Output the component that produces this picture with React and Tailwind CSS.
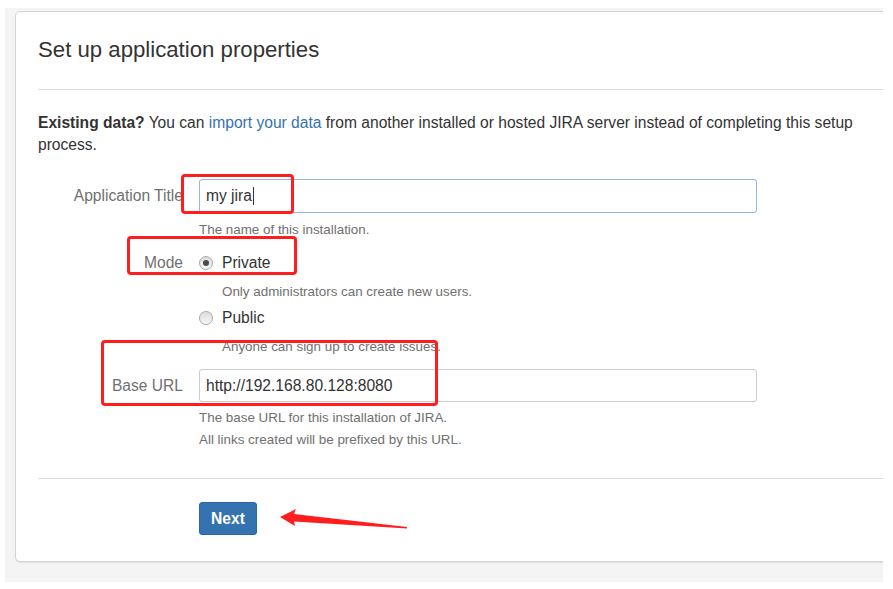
import React from "react";

function Radio({ checked }) {
  return (
    <span className="relative inline-flex items-center justify-center w-[14px] h-[14px] rounded-full border border-[#a8a8a8] bg-gradient-to-b from-[#dcdcdc] to-[#f7f7f7] shrink-0">
      {checked && <span className="w-[6px] h-[6px] rounded-full bg-[#4a4a4a]" />}
    </span>
  );
}

export default function App() {
  return (
    <div className="relative w-[893px] h-[589px] bg-white overflow-hidden font-['Liberation_Sans',Arial,sans-serif] text-[#333]">
      <div className="ml-[5px] mt-[8px] w-[878px] h-[574px] bg-[#f4f4f4] overflow-hidden pt-[3px] pl-[10px]">
        <div className="w-[920px] h-[551px] bg-white border border-[#d5d5d5] rounded-[5px] shadow-[0_1px_1px_rgba(0,0,0,0.08)] px-[22px] flex flex-col">
          <div className="pt-[24px] pb-[25px] border-b border-[#dddddd]">
            <h1 className="text-[22.2px] leading-[28px] font-normal text-[#333]">Set up application properties</h1>
          </div>

          <p className="mt-[22px] text-[15.6px] leading-[22px] whitespace-nowrap">
            <b>Existing data?</b> You can <span className="text-[#3572b0]">import your data</span> from another installed or hosted JIRA server instead of completing this setup
            <br />
            process.
          </p>

          <div className="mt-[23px] grid grid-cols-[145px_558px] gap-x-[16px]">
            <div className="flex items-center justify-end text-[15.6px] text-[#707070] h-[34px] whitespace-nowrap">Application Title</div>
            <div className="h-[34px] border border-[#8fb4e8] rounded-[3px] flex items-center px-[6px] text-[15.6px] text-[#333]">
              my jira<span className="inline-block w-px h-[18px] bg-[#333] ml-[1px]" />
            </div>
            <div />
            <div className="mt-[7px] text-[13.4px] leading-[20px] text-[#707070]">The name of this installation.</div>

            <div className="mt-[12px] h-[22px] flex items-center justify-end text-[15.6px] text-[#707070]">Mode</div>
            <div className="mt-[12px] flex flex-col">
              <div className="h-[22px] flex items-center gap-[9px] text-[15.6px]">
                <Radio checked />
                <span>Private</span>
              </div>
              <div className="mt-[8px] ml-[23px] text-[13.4px] leading-[20px] text-[#707070]">Only administrators can create new users.</div>
              <div className="mt-[5px] h-[22px] flex items-center gap-[9px] text-[15.6px]">
                <Radio />
                <span>Public</span>
              </div>
              <div className="mt-[8px] ml-[23px] text-[13.4px] leading-[20px] text-[#707070]">Anyone can sign up to create issues.</div>
            </div>

            <div className="mt-[12px] h-[33px] flex items-center justify-end text-[15.6px] text-[#707070]">Base URL</div>
            <div className="mt-[12px] h-[33px] border border-[#cccccc] rounded-[3px] flex items-center px-[6px] text-[15.6px] text-[#333]">
              http://192.168.80.128:8080
            </div>
            <div />
            <div className="mt-[5px] text-[13.4px] leading-[22px] text-[#707070]">
              <div>The base URL for this installation of JIRA.</div>
              <div>All links created will be prefixed by this URL.</div>
            </div>
          </div>

          <div className="mt-[27px] border-t border-[#dddddd]" />

          <div className="mt-[23px] pl-[161px]">
            <button className="w-[58px] h-[33px] rounded-[3px] bg-[#3572b0] border border-[#2d68a5] text-white font-bold text-[15.6px]">
              Next
            </button>
          </div>
        </div>
      </div>

      {/* red annotations */}
      <div className="absolute left-[181px] top-[174px] w-[113px] h-[40px] border-[3px] border-[#ff1e1e] rounded-[4px]" />
      <div className="absolute left-[127px] top-[236px] w-[170px] h-[39px] border-[3px] border-[#ff1e1e] rounded-[4px]" />
      <div className="absolute left-[101px] top-[340px] w-[337px] h-[66px] border-[3px] border-[#ff1e1e] rounded-[4px]" />
      <svg className="absolute left-0 top-0" width="893" height="589" viewBox="0 0 893 589">
        <polygon
          points="280,517 296,509 294,514 407,527 407,528.5 294,521.5 295,526"
          fill="#ff1e1e"
        />
      </svg>
    </div>
  );
}
